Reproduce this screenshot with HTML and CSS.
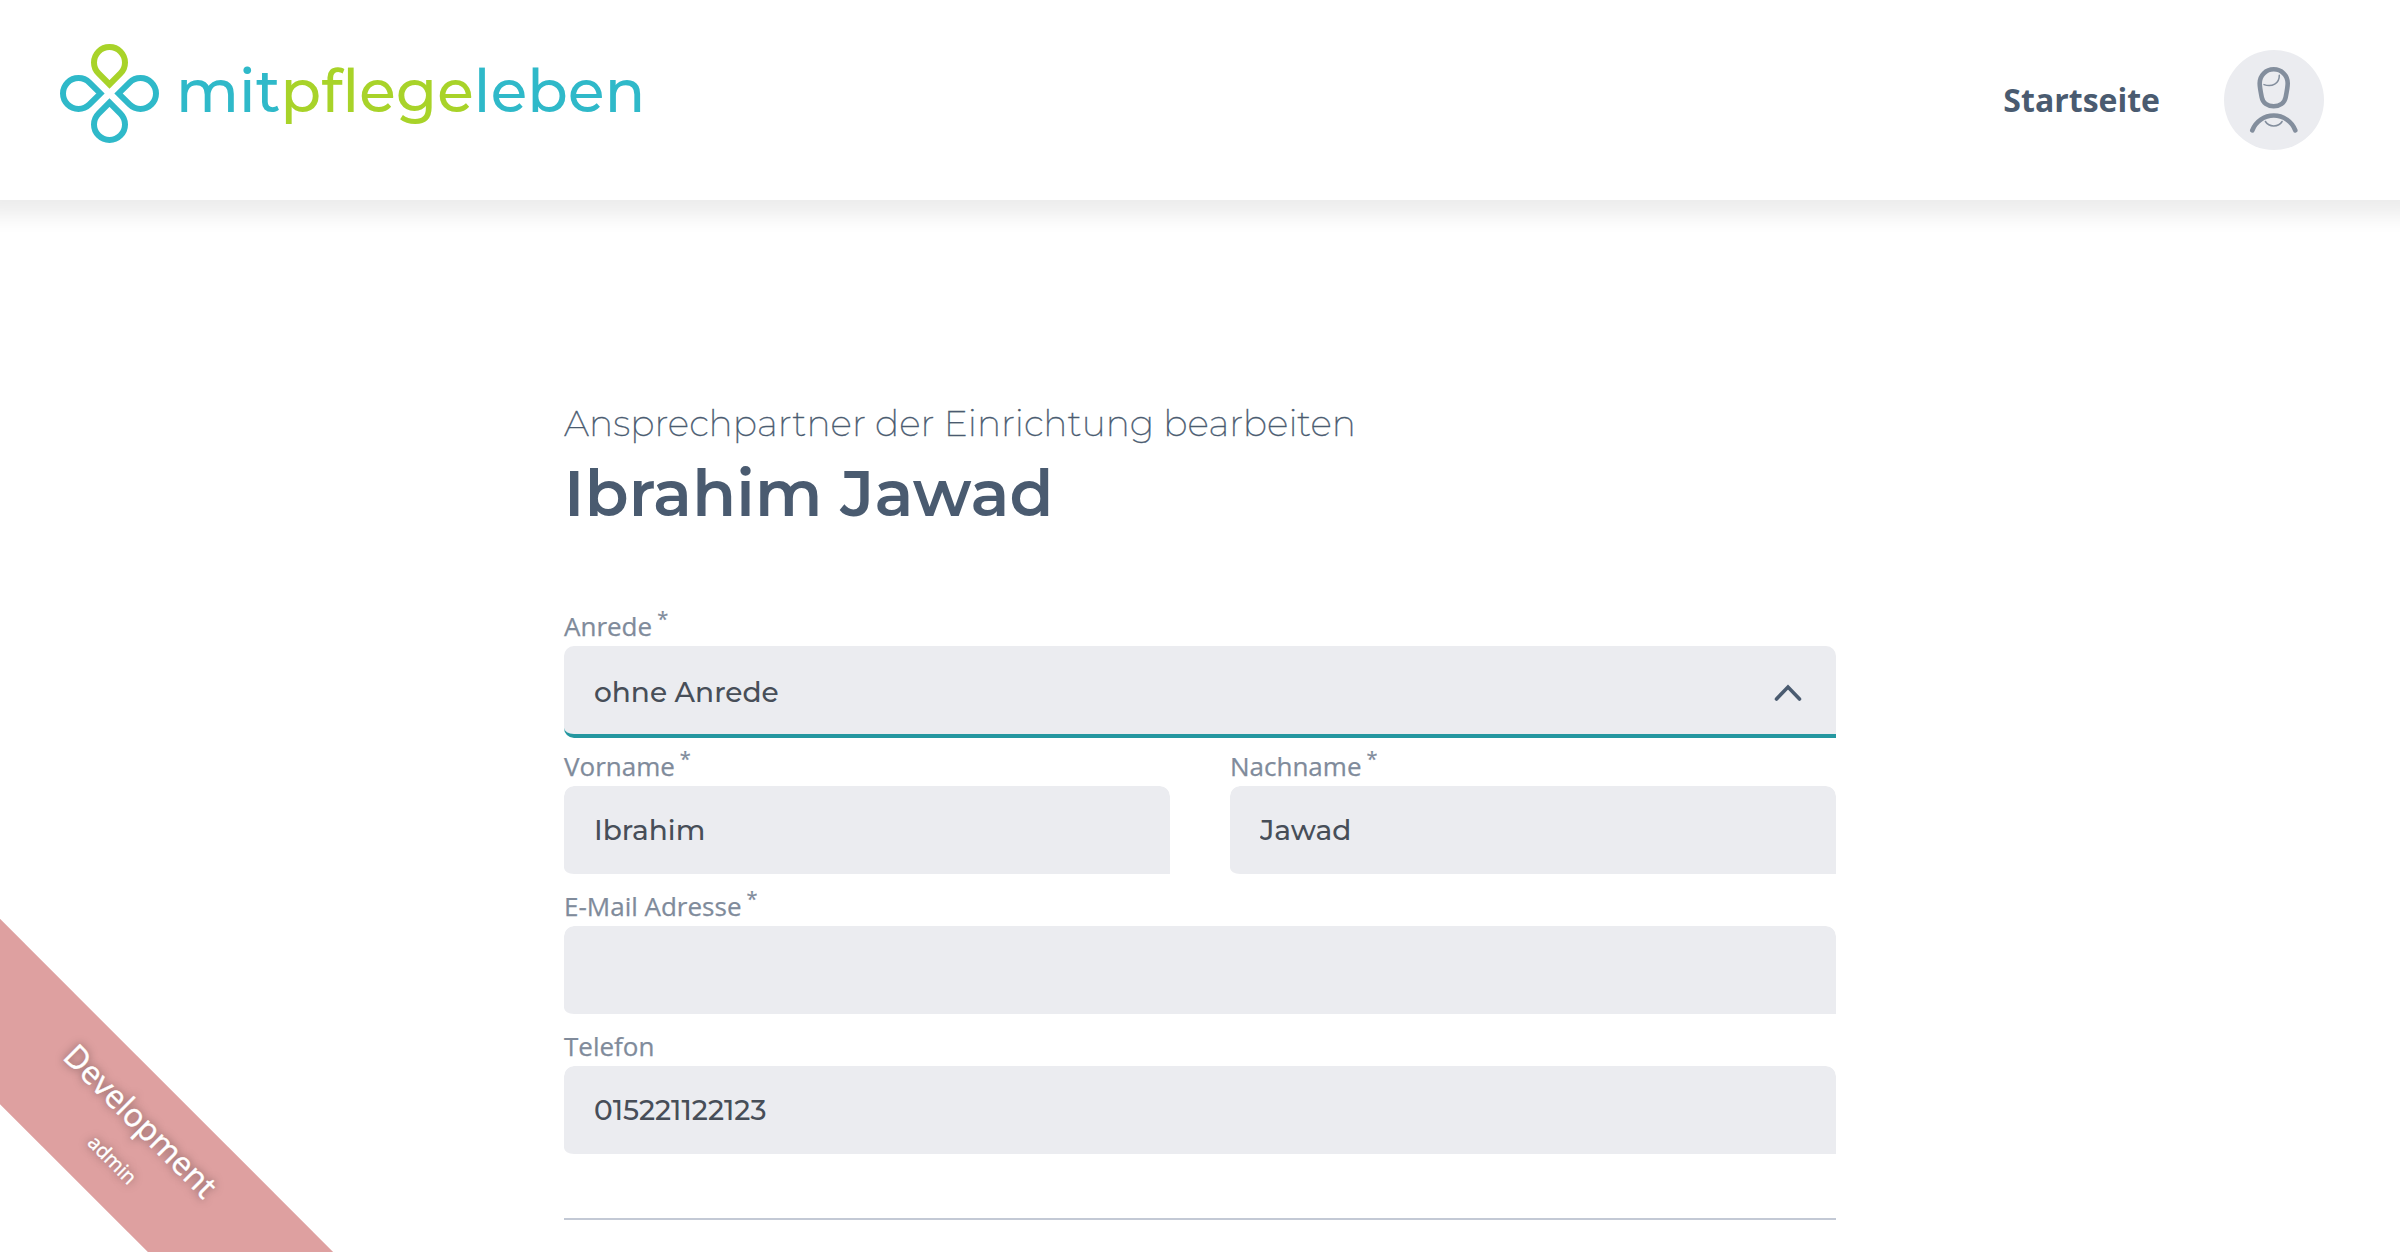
FILE: index.html
```html
<!DOCTYPE html>
<html lang="de">
<head>
<meta charset="utf-8">
<title>mitpflegeleben</title>
<link rel="stylesheet" href="styles.css">
</head>
<body>
<header class="header">
  <a class="logo">
    <svg class="logo-mark" width="99" height="99" viewBox="0 0 99 99" fill="none" stroke="#2fb9c9" stroke-width="6" stroke-miterlimit="10">
      <path stroke="#a8d329" d="M38.54 29.46A15.5 15.5 0 1 1 60.46 29.46L49.5 40.42Z"/>
      <path transform="rotate(90 49.5 49.5)" d="M38.54 29.46A15.5 15.5 0 1 1 60.46 29.46L49.5 40.42Z"/>
      <path transform="rotate(180 49.5 49.5)" d="M38.54 29.46A15.5 15.5 0 1 1 60.46 29.46L49.5 40.42Z"/>
      <path transform="rotate(270 49.5 49.5)" d="M38.54 29.46A15.5 15.5 0 1 1 60.46 29.46L49.5 40.42Z"/>
    </svg>
    <span class="logo-text">mit<span class="logo-accent">pflege</span>leben</span>
  </a>
  <nav class="nav">
    <a class="nav-link">Startseite</a>
    <a class="avatar">
      <svg width="100" height="100" viewBox="0 0 100 100" fill="none" stroke="#838e9d" stroke-linecap="round">
        <path stroke-width="4.6" d="M35.7 33.3C35.7 25.3 42 19.3 49.7 19.3S63.7 25.3 63.7 33.3C63.7 37.5 62.5 43 61.6 47.5C60.5 53 55.8 56.3 49.7 56.3S38.9 53 37.8 47.5C36.9 43 35.7 37.5 35.7 33.3Z"/>
        <path stroke-width="4.6" d="M28.3 80.4A23 23 0 0 1 71.3 80.4"/>
        <path stroke-width="1.5" d="M40 34.6C48 37.4 55.5 33.5 55.3 25.2M41.4 71.5C45 77.4 54.6 77.4 58.1 71.5"/>
      </svg>
    </a>
  </nav>
</header>

<main class="content">
  <h2 class="subtitle">Ansprechpartner der Einrichtung bearbeiten</h2>
  <h1 class="title">Ibrahim Jawad</h1>
  <form class="form">
    <div class="field">
      <label class="label">Anrede<span class="required">*</span></label>
      <div class="control control-select">
        <span class="value">ohne Anrede</span>
        <svg width="28" height="20" viewBox="0 0 28 20" fill="none" stroke="#4a5b70" stroke-width="3.6" stroke-linecap="round"><path d="M2.5 17L14 5L25.5 17"/></svg>
      </div>
    </div>
    <div class="row">
      <div class="field">
        <label class="label" for="first">Vorname<span class="required">*</span></label>
        <input class="control value" id="first" value="Ibrahim">
      </div>
      <div class="field">
        <label class="label" for="last">Nachname<span class="required">*</span></label>
        <input class="control value" id="last" value="Jawad">
      </div>
    </div>
    <div class="field">
      <label class="label" for="mail">E-Mail Adresse<span class="required">*</span></label>
      <input class="control value" id="mail" value="">
    </div>
    <div class="field">
      <label class="label" for="phone">Telefon</label>
      <input class="control value" id="phone" value="015221122123">
    </div>
  </form>
  <hr class="divider">
</main>

<div class="ribbon-corner">
  <div class="ribbon">
    <span class="ribbon-env">Development</span>
    <span class="ribbon-role">admin</span>
  </div>
</div>
</body>
</html>
```
FILE: styles.css
```css
* { box-sizing: border-box; }

body {
  margin: 0;
  height: 1252px;
  position: relative;
  overflow: hidden;
  background: #fff;
  color: #4a5b70;
  font-family: "Open Sans", "Noto Sans", sans-serif;
}

.header {
  height: 200px;
  padding: 0 76px 0 60px;
  display: flex;
  align-items: center;
  justify-content: space-between;
  background: #fff;
  box-shadow: 0 -5px 20px 20px rgba(0, 0, 0, .08);
}

.logo {
  display: flex;
  align-items: center;
  gap: 17px;
  margin-bottom: 13px;
}

.logo-mark { display: block; }

.logo-text {
  font: 500 59.5px/70px Montserrat, Inter, sans-serif;
  font-variant-ligatures: none;
  letter-spacing: .2px;
  color: #2fb9c9;
  margin-bottom: 6px;
}

.logo-accent { color: #a8d329; }

.nav {
  display: flex;
  align-items: center;
  gap: 64px;
}

.nav-link {
  font-size: 32px;
  font-weight: 700;
  line-height: 44px;
}

.avatar {
  width: 100px;
  height: 100px;
  border-radius: 50%;
  background: #ebecf0;
}

.avatar svg { display: block; }

.content {
  width: 1272px;
  margin: 201px auto 0;
}

.subtitle {
  margin: 0 0 10px;
  font: 200 36px/44px Montserrat, Inter, sans-serif;
  letter-spacing: .02px;
  -webkit-text-stroke: .3px #4a5b70;
}

.title {
  margin: 0 0 77px;
  font: 600 64px/76px Montserrat, Inter, sans-serif;
  letter-spacing: .22px;
}

.form {
  display: flex;
  flex-direction: column;
  gap: 10px;
}

.row {
  display: grid;
  grid-template-columns: 1fr 1fr;
  gap: 60px;
}

.field {
  display: flex;
  flex-direction: column;
  gap: 2px;
}

.label {
  display: flex;
  height: 36px;
  font-size: 26px;
  line-height: 36px;
  color: #808b9b;
  -webkit-text-stroke: .25px #808b9b;
}

.required {
  margin-left: 5px;
  font-size: 20px;
  line-height: 22px;
}

.control {
  display: block;
  width: 100%;
  height: 92px;
  padding: 0 30px;
  border: 0;
  border-bottom: 4px solid transparent;
  border-radius: 10px 10px 0 10px;
  background: #ebecf0;
  background-clip: padding-box;
  outline: none;
}

.control-select {
  display: flex;
  align-items: center;
  justify-content: space-between;
  padding: 4px 34px 0 30px;
  border-bottom-color: #2497a0;
}

.value {
  font: 500 28px/36px Montserrat, Inter, sans-serif;
  color: #474e58;
}

.divider {
  margin: 60px 0 0;
  border: 0;
  height: 2px;
  background: #c3c9d5;
}

/* Environment marker laid diagonally over the bottom-left corner */
.ribbon-corner {
  position: absolute;
  left: 0;
  bottom: 0;
  width: 340px;
  height: 340px;
  overflow: hidden;
  pointer-events: none;
}

.ribbon {
  position: absolute;
  left: -175px;
  top: 159px;
  width: 600px;
  height: 131px;
  padding-top: 21px;
  display: flex;
  flex-direction: column;
  align-items: center;
  gap: 12px;
  transform: rotate(45deg);
  background: #dea0a0;
  color: #fff;
  text-shadow: 0 0 8px rgba(0, 0, 0, .5);
  -webkit-text-stroke: .4px #fff;
}

.ribbon-env {
  font-size: 32px;
  line-height: 44px;
}

.ribbon-role {
  margin-left: 15px;
  font-size: 20px;
  line-height: 28px;
}
```
